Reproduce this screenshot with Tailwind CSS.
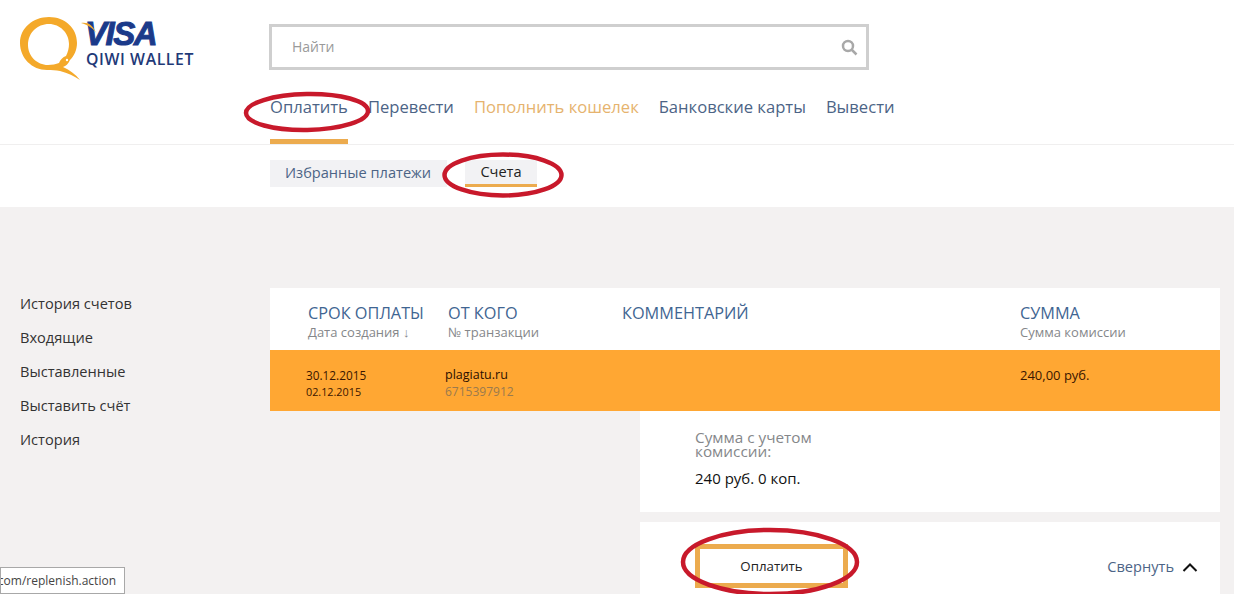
<!DOCTYPE html>
<html lang="ru">
<head>
    <meta charset="UTF-8">
    <title>QIWI Wallet</title>
    <script src="https://cdn.jsdelivr.net/npm/@tailwindcss/browser@4"></script>
</head>
<body class="relative w-[1234px] h-[594px] overflow-hidden bg-[#f3f1f1] font-['Open_Sans','Noto_Sans',sans-serif]">

<!-- header -->
<header class="h-[145px] bg-white border-b border-[#f0efef] flex">
    <div class="w-[270px] shrink-0 relative">
        <svg class="absolute left-[18px] top-[15px]" width="66" height="68" viewBox="18 15 66 68">
            <path fill-rule="evenodd" d="M49 17C65 17 77 28 77 43C77 50 74 56 70 60C68 64 66 66 63 67C70 70 75 74 80 80C74 76 68 73 60 71C56 70 52 70 47 70C32 70 20 58 20 43C20 28 33 17 49 17ZM49 24C37 24 28 33 28 45C28 56 37 65 48 65C52 65 56 64 59 63C60 60 63 57 66 56C68 52 69 48 69 44C69 33 60 24 49 24Z" fill="#f4a92a"/>
            <circle cx="67" cy="60" r="1.2" fill="#fff"/>
        </svg>
        <div class="absolute left-[85px] top-[18px] text-[33px] leading-[32px] font-bold italic text-[#1b3a8a] font-['Liberation_Sans',sans-serif] tracking-[-1.5px] [-webkit-text-stroke:1px_#1b3a8a]">VISA</div>
        <svg class="absolute left-[81px] top-[22px]" width="22" height="12" viewBox="0 0 22 12"><path d="M0 1C7 0 12 3 15 11C12 6 7 3 0 1Z" fill="#f0a92e"/></svg>
        <div class="absolute left-[86px] top-[51px] text-[15.8px] leading-4 font-semibold text-[#1f3a78] tracking-[0.6px]">QIWI WALLET</div>
    </div>
    <div class="flex-1 flex flex-col">
        <div class="mt-6 w-[600px] h-[46px] -ml-px border-[3px] border-[#cfcfcf] flex items-center justify-between pl-5 pr-2">
            <span class="text-sm text-[#9a9a9a]">Найти</span>
            <svg width="17" height="17" viewBox="0 0 17 17" fill="none" stroke="#a8a8a8" stroke-width="2.5"><circle cx="7" cy="7" r="5"/><path d="M11 11l4.5 4.5"/></svg>
        </div>
        <nav class="mt-[25px] flex gap-5 text-[16.6px] leading-6 text-[#4c6486]">
            <a class="relative">Оплатить<span class="absolute left-0 right-0 top-[44px] h-[5px] bg-[#ecab4e]"></span></a>
            <a>Перевести</a>
            <a class="text-[#e6b36e]">Пополнить кошелек</a>
            <a>Банковские карты</a>
            <a>Вывести</a>
        </nav>
    </div>
</header>

<!-- subnav -->
<div class="h-[62px] bg-white pl-[270px] pt-[15px] flex items-start">
    <a class="h-[27px] w-[177px] bg-[#f2f2f4] text-[14.6px] leading-[24px] text-[#4c6486] pl-[15px]">Избранные платежи</a>
    <a class="ml-[18px] h-[27px] w-[72px] bg-[#f2f2f4] border-b-[3px] border-[#ecab4e] text-[14.6px] leading-[23px] text-center text-[#222]">Счета</a>
</div>

<!-- content -->
<main class="flex pt-[81px]">
    <aside class="w-[270px] shrink-0 pl-5 -mt-[2px] text-[14.6px] leading-[34px] text-[#333]">
        <div>История счетов</div>
        <div>Входящие</div>
        <div>Выставленные</div>
        <div>Выставить счёт</div>
        <div>История</div>
    </aside>
    <section class="w-[950px]">
        <div class="h-[62px] bg-white flex pt-[15px] relative">
            <div class="w-[178px] pl-[38px]">
                <div class="text-[16.3px] leading-[20px] text-[#3f6592]">СРОК ОПЛАТЫ</div>
                <div class="text-[13px] leading-[18px] text-[#85878a]">Дата создания ↓</div>
            </div>
            <div class="w-[174px]">
                <div class="text-[16.3px] leading-[20px] text-[#3f6592]">ОТ КОГО</div>
                <div class="text-[13px] leading-[18px] text-[#85878a]">№ транзакции</div>
            </div>
            <div class="w-[398px] text-[16.3px] leading-[20px] text-[#3f6592]">КОММЕНТАРИЙ</div>
            <div>
                <div class="text-[16.3px] leading-[20px] text-[#3f6592]">СУММА</div>
                <div class="text-[13px] leading-[18px] text-[#85878a]">Сумма комиссии</div>
            </div>
        </div>
        <div class="h-[61px] bg-[#ffa733] flex pt-[16px] text-[12.5px] text-[#3a1600]">
            <div class="w-[175px] pl-9 pt-px leading-[16.5px]">
                <div class="text-[11.8px]">30.12.2015</div>
                <div class="text-[10.8px]">02.12.2015</div>
            </div>
            <div class="w-[575px] leading-[18px]">
                <div class="text-[#2b0f00]">plagiatu.ru</div>
                <div class="text-[#9a7a4e] text-xs">6715397912</div>
            </div>
            <div class="text-[13px] leading-[18px]">240,00 руб.</div>
        </div>
        <div class="ml-[370px] w-[580px]">
            <div class="h-[101px] bg-white pl-[55px] pt-[19px]">
                <div class="w-[130px] text-[15.3px] leading-[14px] text-[#85878a]">Сумма с учетом комиссии:</div>
                <div class="mt-[10px] text-[15px] leading-5 font-medium text-[#111]">240 руб. 0 коп.</div>
            </div>
            <div class="mt-[10px] h-[72px] bg-white pl-[55px] pr-[22px] flex items-start justify-between">
                <button class="mt-[22px] w-[153px] h-[44px] bg-white border-[5px] border-[#ecab4e] text-[13.3px] leading-[32px] text-[#222]">Оплатить</button>
                <div class="mt-[34px] flex items-center gap-[8px] text-[14.6px] leading-5 text-[#4c6486]">
                    <span>Свернуть</span>
                    <svg class="mt-[2px]" width="16" height="10" viewBox="0 0 16 10" fill="none" stroke="#111" stroke-width="2"><path d="M1.5 9L8 2.5L14.5 9"/></svg>
                </div>
            </div>
        </div>
    </section>
</main>

<!-- status bar tooltip -->
<div class="absolute left-0 bottom-0 h-[27px] w-[125px] bg-white border border-[#a8a8a8] text-xs leading-[25px] text-[#444] whitespace-nowrap overflow-hidden flex justify-end pr-2">com/replenish.action</div>

<!-- red hand-drawn ovals -->
<svg class="absolute inset-0 pointer-events-none" width="1234" height="594" fill="none" stroke="#c8192b" stroke-width="4.5">
    <ellipse cx="307" cy="112" rx="61" ry="18" transform="rotate(-1 307 112)"/>
    <ellipse cx="503" cy="175" rx="58.5" ry="20.5"/>
    <ellipse cx="770" cy="562" rx="87" ry="32"/>
</svg>
</body>
</html>
